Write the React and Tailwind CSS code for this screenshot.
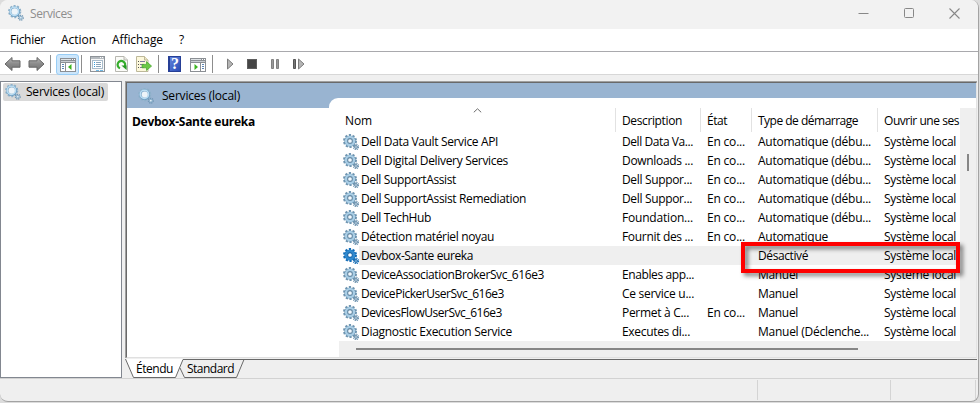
import { useLayoutEffect, useRef } from "react";

// Text run whose tracking is adjusted so that it spans `w` pixels.
function T({ w, className = "", children }) {
  const ref = useRef(null);
  useLayoutEffect(() => {
    const el = ref.current;
    el.style.letterSpacing = "0px";
    const natural = el.getBoundingClientRect().width;
    el.style.letterSpacing = `${(w - natural) / el.textContent.length}px`;
  }, [w, children]);
  return (
    <span ref={ref} className={"inline-block shrink-0 whitespace-pre " + className}>
      {children}
    </span>
  );
}

function RowGear({ selected }) {
  const edge = selected ? "#0d62aa" : "#6288a5";
  const body = selected ? "#2f8ad0" : "#a9cee6";
  const teeth = selected ? "#166fb9" : "#7096b2";
  return (
    <svg width="16" height="16" viewBox="0 0 16 16" className="shrink-0">
      <circle cx="7" cy="7" r="6" fill="none" stroke={teeth} strokeWidth="2" strokeDasharray="2.2 1.57" />
      <circle cx="7" cy="7" r="4.3" fill="none" stroke={edge} strokeWidth="2.6" />
      <circle cx="7" cy="7" r="4" fill="none" stroke={body} strokeWidth="2.4" />
      <circle cx="7" cy="7" r="2.4" fill={selected ? "#fff" : "#f4f9fd"} stroke={edge} strokeWidth="1.1" />
      <circle cx="13" cy="13" r="2.5" fill="none" stroke={teeth} strokeWidth="1.4" strokeDasharray="1.2 0.76" />
      <circle cx="13" cy="13" r="1.4" fill={selected ? "#a9d0ee" : "#cfe3f0"} stroke={edge} strokeWidth="1" />
    </svg>
  );
}

function ServicesIcon() {
  return (
    <svg width="16" height="16" viewBox="0 0 16 16" className="shrink-0">
      <circle cx="6.7" cy="6.6" r="5.7" fill="none" stroke="#8db0c9" strokeWidth="1.8" strokeDasharray="2 1.58" />
      <circle cx="6.7" cy="6.6" r="4.3" fill="none" stroke="#6f9fc2" strokeWidth="2.2" />
      <circle cx="6.4" cy="6.3" r="4.1" fill="none" stroke="#b9dcf2" strokeWidth="1.6" />
      <circle cx="6.7" cy="6.6" r="3" fill="#edf4f9" />
      <circle cx="12.8" cy="12.7" r="2.4" fill="none" stroke="#7096b4" strokeWidth="1.3" strokeDasharray="1.15 0.73" />
      <circle cx="12.8" cy="12.7" r="1.4" fill="#dbeaf4" stroke="#7fa8c6" strokeWidth="0.9" />
    </svg>
  );
}

function Arrow({ right }) {
  return (
    <svg width="17" height="16" viewBox="0 0 17 16" className={right ? "-scale-x-100 shrink-0" : "shrink-0"}>
      <defs>
        <linearGradient id="arrow" x1="0" y1="0" x2="0" y2="1">
          <stop offset="0" stopColor="#b5b5b5" />
          <stop offset="0.5" stopColor="#8a8a8a" />
          <stop offset="1" stopColor="#757575" />
        </linearGradient>
      </defs>
      <path d="M1 8 L8 1.5 V4.8 H16 V11.2 H8 V14.5 Z" fill="url(#arrow)" stroke="#666" strokeWidth="1" strokeLinejoin="round" />
    </svg>
  );
}

function PaneIcon({ flip }) {
  return (
    <svg width="16" height="14" viewBox="0 0 16 14" className="block shrink-0" shapeRendering="crispEdges">
      <rect x="0" y="0" width="16" height="14" fill="#8b8f94" />
      <rect x="1" y="1" width="10" height="1" fill="#dfe3e6" />
      <rect x="12" y="1" width="1" height="1" fill="#fff" />
      <rect x="14" y="1" width="1" height="1" fill="#fff" />
      <rect x="1" y="3" width="14" height="1" fill="#c9ced3" />
      {flip ? (
        <>
          <rect x="1" y="5" width="9" height="8" fill="#fff" />
          <rect x="11" y="5" width="4" height="8" fill="#fff" />
          <path d="M12 6h2v1h-2zM12 8h2v1h-2zM12 10h2v1h-2z" fill="#5c87b8" />
          <path d="M4.5 6 L8 9 L4.5 12 Z" fill="#3cb521" shapeRendering="auto" />
        </>
      ) : (
        <>
          <rect x="1" y="5" width="4" height="8" fill="#fff" />
          <rect x="6" y="5" width="9" height="8" fill="#fff" />
          <path d="M2 6h2v1h-2zM2 8h2v1h-2zM2 10h2v1h-2z" fill="#5c87b8" />
          <path d="M11.5 6 L8 9 L11.5 12 Z" fill="#3cb521" shapeRendering="auto" />
        </>
      )}
    </svg>
  );
}

function PropertiesIcon() {
  return (
    <svg width="15" height="16" viewBox="0 0 15 16" className="shrink-0" shapeRendering="crispEdges">
      <rect x="0.5" y="0.5" width="14" height="15" fill="#f8f8f8" stroke="#8f9499" />
      <rect x="1" y="1" width="13" height="2" fill="#b6bbc0" />
      <path d="M10 1h1v1h-1zM12 1h1v1h-1z" fill="#fff" />
      <rect x="2.5" y="4.5" width="10" height="8" fill="#fff" stroke="#a9bccb" />
      <path d="M4 6h1v1h-1zM4 8h1v1h-1zM4 10h1v1h-1z" fill="#2c9be0" />
      <path d="M6 6h5v1h-5zM6 8h5v1h-5zM6 10h5v1h-5z" fill="#8aa5bb" />
      <path d="M6 14h3v1h-3zM10 14h3v1h-3z" fill="#6fb9e6" />
    </svg>
  );
}

function RefreshIcon() {
  return (
    <svg width="13" height="16" viewBox="0 0 13 16" className="shrink-0">
      <path d="M0.5 0.5 H9 L12.5 4 V15.5 H0.5 Z" fill="#fbfbf8" stroke="#b7b7b0" />
      <path d="M9 0.5 V4 H12.5" fill="#e8e8e2" stroke="#b7b7b0" />
      <path d="M5 12.3 A3.8 3.8 0 1 1 9.6 10.8" fill="none" stroke="#35ad2c" strokeWidth="2.2" />
      <path d="M6.4 9.6 H11.6 V14 Z" fill="#279a24" />
    </svg>
  );
}

function ExportIcon() {
  return (
    <svg width="16" height="16" viewBox="0 0 16 16" className="shrink-0">
      <path d="M0.5 0.5 H8.5 L12 4 V15.5 H0.5 Z" fill="#fdf8dc" stroke="#bdb89a" />
      <path d="M8.5 0.5 V4 H12" fill="#efe8c0" stroke="#bdb89a" />
      <path d="M2 5h1v1h-1zM2 8h1v1h-1zM2 11h1v1h-1z" fill="#555" />
      <path d="M4 5h5v1h-5zM4 8h4v1h-4zM4 11h4v1h-4z" fill="#7e7a9c" />
      <path d="M6 8.4 H10.5 V5.6 L15.6 10.1 L10.5 14.4 V11.8 H6 Z" fill="#6cc945" stroke="#45a52d" strokeWidth="0.7" />
    </svg>
  );
}

function HelpIcon() {
  return (
    <span className="flex h-4 w-[13px] shrink-0 items-center justify-center border border-l-2 border-[#263f96] bg-linear-to-br from-[#6284dc] to-[#2b4bb5] font-['Liberation_Serif',serif] text-[16px] leading-none font-bold text-white">
      ?
    </span>
  );
}

const sep = "h-[18px] w-px shrink-0 bg-[#8d8d8d]";

const auto = ["Automatique (débu...", 113];
const manual = ["Manuel", 40];
const rows = [
  ["Dell Data Vault Service API", 137, "Dell Data Va...", 71, true, auto],
  ["Dell Digital Delivery Services", 147, "Downloads ...", 71, true, auto],
  ["Dell SupportAssist", 95, "Dell Suppor...", 70, true, auto],
  ["Dell SupportAssist Remediation", 165, "Dell Suppor...", 70, true, auto],
  ["Dell TechHub", 70, "Foundation...", 71, true, auto],
  ["Détection matériel noyau", 133, "Fournit des ...", 71, true, ["Automatique", 70]],
  ["Devbox-Sante eureka", 112, "", 0, false, ["Désactivé", 50]],
  ["DeviceAssociationBrokerSvc_616e3", 183, "Enables app...", 72, false, manual],
  ["DevicePickerUserSvc_616e3", 143, "Ce service u...", 72, false, manual],
  ["DevicesFlowUserSvc_616e3", 141, "Permet à C...", 67, true, manual],
  ["Diagnostic Execution Service", 151, "Executes di...", 68, false, ["Manuel (Déclenche...", 111]],
];

const cols = "grid grid-cols-[277px_85px_51px_126px_82px]";

function ServiceRow({ row }) {
  const [name, nw, desc, dw, running, [type, tw]] = row;
  const selected = name === "Devbox-Sante eureka";
  return (
    <div
      className={
        cols + " h-[19px] items-center leading-[19px] " +
        (selected ? "bg-[linear-gradient(90deg,#fff_20px,#efefef_20px)]" : "")
      }
    >
      <div className="flex items-center gap-0.5 pl-1">
        <RowGear selected={selected} />
        <T w={nw}>{name}</T>
      </div>
      <div className="pl-1.5">{desc && <T w={dw}>{desc}</T>}</div>
      <div className="pl-1.5">{running && <T w={38}>En co...</T>}</div>
      <div className="pl-1.5"><T w={tw}>{type}</T></div>
      <div className="pl-1.5"><T w={72}>Système local</T></div>
    </div>
  );
}

function Head({ w, children, last }) {
  return (
    <div className={"flex h-6 items-center pt-px pl-1.5 " + (last ? "" : "border-r border-[#e2e2e2]")}>
      <T w={w}>{children}</T>
    </div>
  );
}

export default function App() {
  return (
    <div className="h-[403px] w-[980px] overflow-hidden bg-[#dcdcdc] font-['Open_Sans','Noto_Sans',sans-serif] text-[12px] text-black">
      <div className="relative flex h-[402px] w-[979px] flex-col overflow-hidden rounded-[8px] border-r border-b border-[#a3a3a3] bg-[#efefef]">
        <header className="flex h-[29px] shrink-0 items-center bg-[#f2f2f2] pr-[18px] pb-[3px] pl-2">
          <ServicesIcon />
          <T w={42} className="ml-1.5 pt-px text-[#8e8e8e]">Services</T>
          <div className="ml-auto flex items-center gap-[35px] text-[#888]">
            <svg width="11" height="11" viewBox="0 0 11 11"><path d="M0.5 5.5h10" stroke="currentColor" /></svg>
            <svg width="10" height="10" viewBox="0 0 10 10"><rect x="0.5" y="0.5" width="9" height="9" rx="1" fill="none" stroke="currentColor" /></svg>
            <svg width="11" height="11" viewBox="0 0 11 11"><path d="M0.5 0.5l10 10M10.5 0.5l-10 10" stroke="currentColor" strokeWidth="1.1" /></svg>
          </div>
        </header>

        <nav className="flex h-[23px] shrink-0 items-center gap-4 border-b border-[#a9a9ad] bg-white pl-2.5">
          <T w={35}>Fichier</T>
          <T w={35}>Action</T>
          <T w={51}>Affichage</T>
          <T w={5}>?</T>
        </nav>

        <div className="flex h-[23px] shrink-0 items-center border-b border-[#d7d7d7] bg-white pt-0.5 pl-1">
          <Arrow />
          <span className="w-[7px]" />
          <Arrow right />
          <span className={sep + " ml-[5px]"} />
          <span className="ml-[5px] flex h-[21px] w-[23px] items-center justify-center rounded-[3px] border border-[#99cdf5] bg-[#cce6fb] pt-0.5">
            <PaneIcon />
          </span>
          <span className={sep + " ml-0.5"} />
          <span className="w-2" />
          <PropertiesIcon />
          <span className="w-2.5" />
          <RefreshIcon />
          <span className="w-2" />
          <ExportIcon />
          <span className={sep + " ml-1.5"} />
          <span className="w-[9px]" />
          <HelpIcon />
          <span className="w-[9px]" />
          <span className="pt-0.5"><PaneIcon flip /></span>
          <span className={sep + " ml-[6px]"} />
          <svg width="80" height="14" viewBox="0 0 80 14" className="ml-[13px]">
            <path d="M1.5 2 V12 L7 7 Z" fill="#b5b5b5" stroke="#7c7c7c" />
            <rect x="21.5" y="2.5" width="9" height="9" fill="#454545" stroke="#5e5e5e" />
            <path d="M45.5 2.5h2v9h-2zM50.5 2.5h2v9h-2z" fill="#999" stroke="#818181" />
            <path d="M67.5 2.5h2v9h-2z" fill="#777" stroke="#555" />
            <path d="M72.5 2 V12 L78 7 Z" fill="#b5b5b5" stroke="#7c7c7c" />
          </svg>
        </div>

        <main className="flex h-[304px] shrink-0 border-b border-[#d2d2d2] pt-1.5">
          <aside className="h-[297px] w-[122px] shrink-0 border border-[#828790] bg-white pt-px pl-0.5">
            <div className="flex h-[18px] w-[105px] items-center gap-[5px] rounded-[2px] bg-[#d9d9d9] pl-0.5">
              <ServicesIcon />
              <T w={78}>Services (local)</T>
            </div>
          </aside>

          <div className="ml-[3px] flex w-[852px] shrink-0 flex-col">
            <section className="flex h-[277px] shrink-0 flex-col border-t border-l border-[#a0a0a0]">
              <div className="flex h-[276px] flex-col border-t border-r border-b border-l border-t-[#696969] border-r-[#e3e3e3] border-b-[#e0e0e0] border-l-[#696969] bg-white">
                <div className="flex h-[25px] shrink-0 bg-[#99b4d1]">
                  <div className="flex w-[202px] items-center gap-2 pt-px pl-[11px]">
                    <ServicesIcon />
                    <T w={78}>Services (local)</T>
                  </div>
                  <div className="mt-[15px] h-2.5 flex-1 rounded-tl-[9px] bg-white" />
                </div>
                <div className="flex h-[249px]">
                  <div className="w-[212px] shrink-0 pt-[5px] pl-[5px]">
                    <T w={123} className="font-bold">Devbox-Sante eureka</T>
                  </div>
                  <div className="flex w-[637px] shrink-0 flex-col">
                    <div className="flex h-[233px]">
                      <div className="w-[621px] shrink-0 overflow-hidden">
                        <div className={cols + " relative"}>
                          <Head w={27}>Nom</Head>
                          <Head w={60}>Description</Head>
                          <Head w={20}>État</Head>
                          <Head w={100}>Type de démarrage</Head>
                          <Head w={75} last>Ouvrir une ses</Head>
                          <svg width="9" height="5" viewBox="0 0 9 5" className="absolute top-0 left-[134px]">
                            <path d="M0.8 4.3 L4.5 0.8 L8.2 4.3" fill="none" stroke="#6a6a6a" />
                          </svg>
                        </div>
                        {rows.map((r) => <ServiceRow key={r[0]} row={r} />)}
                      </div>
                      <div className="flex flex-1 justify-center bg-[#efefef] pt-[46px]">
                        <div className="h-[17px] w-0.5 bg-[#868686]" />
                      </div>
                    </div>
                    <div className="h-4 bg-[#efefef] pt-[7px] pl-[17px]">
                      <div className="h-0.5 w-[502px] bg-[#868686]" />
                    </div>
                  </div>
                </div>
              </div>
            </section>

            <div className="relative h-5 shrink-0">
              <svg width="852" height="20" viewBox="0 0 852 20" className="absolute inset-0">
                <path d="M58 1.5 H852" stroke="#696969" />
                <path d="M0.5 1 L8.5 19.5 H50.5 L58 1 Z" fill="#fff" />
                <path d="M0.5 1 L8.5 19.5 H50.5 L58 1.5" fill="none" stroke="#696969" />
                <path d="M55 10 L59.5 19.5 H111.5 L119 1.5" fill="none" stroke="#696969" />
              </svg>
              <div className="relative flex pt-[3px] pl-[11px] leading-4">
                <T w={37}>Étendu</T>
                <T w={47} className="ml-3.5">Standard</T>
              </div>
            </div>
          </div>
        </main>

        <footer className="flex flex-1 py-px">
          <div className="w-[758px] border-r border-[#d4d4d4]" />
          <div className="w-[133px] border-r border-[#d4d4d4]" />
          <div className="w-[85px] border-r border-[#d4d4d4]" />
        </footer>

        <div className="absolute top-[242px] left-[741px] h-[31px] w-[219px] border-4 border-[#ff0000] drop-shadow-[3px_3px_2px_rgba(0,0,0,0.5)]" />
      </div>
    </div>
  );
}
